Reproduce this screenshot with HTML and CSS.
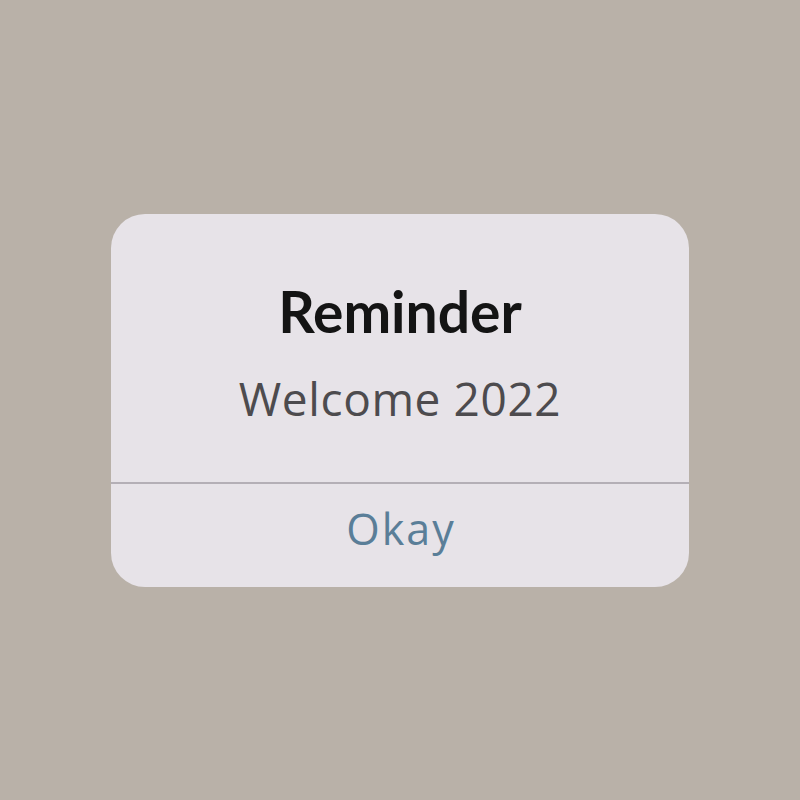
FILE: index.html
```html
<!DOCTYPE html>
<html>
<head>
<meta charset="utf-8">
<link rel="stylesheet" href="styles.css">
</head>
<body>
<div class="card">
  <div class="body">
    <div class="title">Reminder</div>
    <div class="message">Welcome 2022</div>
  </div>
  <div class="divider"></div>
  <div class="action">Okay</div>
</div>
</body>
</html>
```
FILE: styles.css
```css
html, body { margin: 0; height: 100%; }
body {
  background: #b9b1a8;
  display: flex;
  align-items: center;
  justify-content: center;
  font-family: "Open Sans", sans-serif;
}
.card {
  width: 578px;
  height: 373px;
  background: #e7e3e8;
  border-radius: 34px;
  display: flex;
  flex-direction: column;
  overflow: hidden;
}
.body {
  height: 268px;
  display: flex;
  flex-direction: column;
  align-items: center;
  padding-top: 63px;
  box-sizing: border-box;
}
.title {
  font-family: Lato, "Open Sans", sans-serif;
  font-size: 57px;
  font-weight: 700;
  color: #141414;
  line-height: 1.2;
}
.message {
  font-size: 46px;
  letter-spacing: 0.6px;
  color: #4d4b4e;
  margin-top: 22px;
}
.divider {
  height: 2px;
  background: #b4afb6;
}
.action {
  flex: 1;
  display: flex;
  align-items: center;
  justify-content: center;
  font-size: 43px;
  letter-spacing: 2px;
  color: #5a7e98;
  padding-bottom: 14px;
  padding-left: 2px;
}
```
